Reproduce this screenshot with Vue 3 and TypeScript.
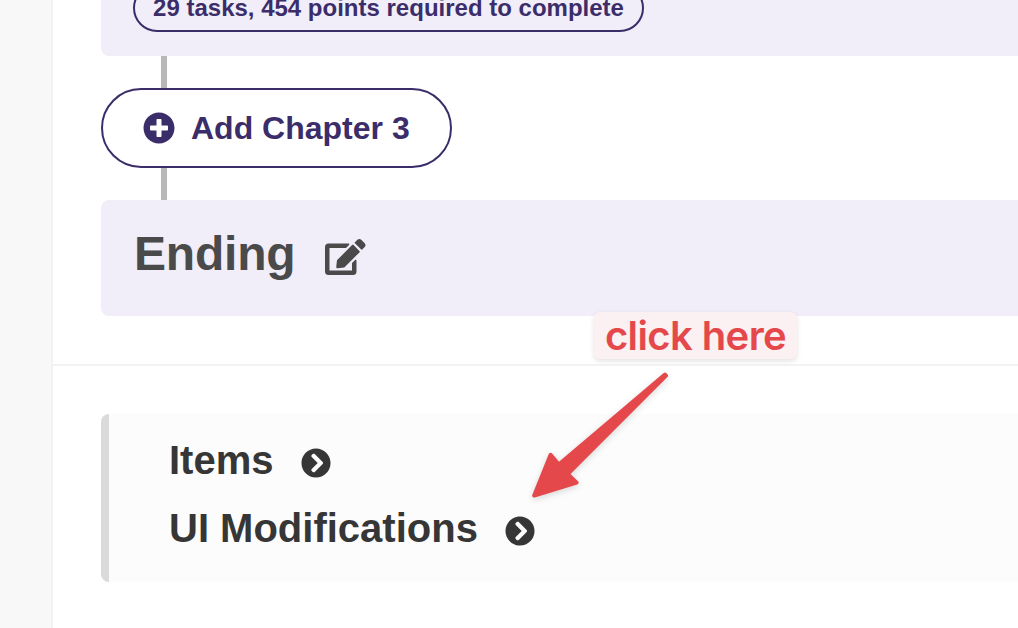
<script setup lang="ts">
interface SettingsLink {
  id: string;
  label: string;
}

const tasks = 29;
const points = 454;
const nextChapter = 3;

const links: SettingsLink[] = [
  { id: "items", label: "Items" },
  { id: "ui", label: "UI Modifications" }
];
</script>

<template>
  <div class="page">
    <aside class="page__sidebar"></aside>
    <main class="page__main">
      <section class="story">
        <div class="chapter chapter--last">
          <span class="chapter__badge">{{ tasks }} tasks, {{ points }} points required to complete</span>
        </div>
        <div class="connector"></div>
        <button class="add" type="button">
          <svg class="add__icon" viewBox="0 0 512 512">
            <path d="M256 8C119 8 8 119 8 256s111 248 248 248 248-111 248-248S393 8 256 8zm144 276c0 6.6-5.4 12-12 12h-92v92c0 6.6-5.4 12-12 12h-56c-6.6 0-12-5.4-12-12v-92h-92c-6.6 0-12-5.4-12-12v-56c0-6.6 5.4-12 12-12h92v-92c0-6.6 5.4-12 12-12h56c6.6 0 12 5.4 12 12v92h92c6.6 0 12 5.4 12 12v56z" />
          </svg>
          <span class="add__text">Add Chapter {{ nextChapter }}</span>
        </button>
        <div class="connector"></div>
        <div class="chapter chapter--ending">
          <h2 class="chapter__title">Ending</h2>
          <svg class="chapter__edit" viewBox="0 0 576 512">
            <path d="M402.6 83.2l90.2 90.2c3.8 3.8 3.8 10 0 13.8L274.4 405.6l-92.8 10.3c-12.4 1.4-22.9-9.1-21.5-21.5l10.3-92.8L388.8 83.2c3.8-3.8 10-3.8 13.8 0zm162-22.9l-48.8-48.8c-15.2-15.2-39.9-15.2-55.2 0l-35.4 35.4c-3.8 3.8-3.8 10 0 13.8l90.2 90.2c3.8 3.8 10 3.8 13.8 0l35.4-35.4c15.2-15.3 15.2-40 0-55.2zM384 346.2V448H64V128h229.8c3.2 0 6.2-1.3 8.5-3.5l40-40c7.6-7.6 2.2-20.5-8.5-20.5H48C21.5 64 0 85.5 0 112v352c0 26.5 21.5 48 48 48h352c26.5 0 48-21.5 48-48V306.2c0-10.7-12.9-16-20.5-8.5l-40 40c-2.2 2.3-3.5 5.3-3.5 8.5z" />
          </svg>
        </div>
      </section>
      <section class="extras">
        <div class="links">
          <div v-for="link in links" :key="link.id" class="links__row">
            <span class="links__label">{{ link.label }}</span>
            <svg class="links__icon" viewBox="0 0 512 512">
              <path d="M256 8c137 0 248 111 248 248S393 504 256 504 8 393 8 256 119 8 256 8zm113.9 231L234.4 103.5c-9.4-9.4-24.6-9.4-33.9 0l-17 17c-9.4 9.4-9.4 24.6 0 33.9L285.1 256 183.5 357.6c-9.4 9.4-9.4 24.6 0 33.9l17 17c9.4 9.4 24.6 9.4 33.9 0L369.9 273c9.4-9.4 9.4-24.6 0-34z" />
            </svg>
          </div>
        </div>
      </section>
    </main>

    <!-- annotation on top of the page -->
    <div class="hint">click here</div>
    <svg class="arrow" viewBox="520 364 160 146">
      <path d="M665 374.6L558.8 464.6L550.6 454.8L534.2 495.6L576.6 482.6L567.6 474L666 375.6Z" />
    </svg>
  </div>
</template>

<style>
body {
  background-color: #ffffff;
}
</style>

<style scoped>
.page {
  position: relative;
  display: flex;
  height: 628px;
  overflow: hidden;
  font-family: "Liberation Sans", Arial, sans-serif;
  font-weight: 700;
}

.page__sidebar {
  box-sizing: border-box;
  flex: none;
  width: 53px;
  background-color: #f8f8f8;
  border-right: 2px solid #f2f2f2;
}

.page__main {
  flex: 1;
  min-width: 0;
}

.story {
  padding: 0 0 48px 48px;
  border-bottom: 2px solid #f3f3f3;
}

.chapter {
  box-sizing: border-box;
  display: flex;
  padding-left: 32px;
  background-color: #f1edf9;
  border-radius: 8px 0 0 8px;
}

.chapter--last {
  height: 56px;
  align-items: flex-end;
  padding-bottom: 24px;
  border-top-left-radius: 0;
}

.chapter--ending {
  height: 116px;
  padding-top: 26px;
  padding-left: 33px;
}

.chapter__badge {
  box-sizing: border-box;
  display: flex;
  justify-content: center;
  flex: none;
  width: 511px;
  height: 48px;
  border: 2px solid #3b2d69;
  border-radius: 24px;
  color: #3b2d69;
  font-size: 24px;
  line-height: 44px;
  white-space: nowrap;
}

.chapter__title {
  margin: 0;
  width: 191px;
  font-size: 48px;
  letter-spacing: -0.2px;
  line-height: 56px;
  color: #4a4a4a;
}

.chapter__edit {
  width: 40.5px;
  height: 36px;
  margin-top: 13px;
  fill: #4a4a4a;
}

.connector {
  width: 6px;
  height: 32px;
  margin-left: 60px;
  background-color: #b8b8b8;
}

.add {
  box-sizing: border-box;
  display: flex;
  align-items: center;
  gap: 16px;
  width: 351px;
  height: 80px;
  padding: 0 0 0 40px;
  border: 2px solid #3b2d69;
  border-radius: 40px;
  background-color: #ffffff;
  color: #3b2d69;
  font: inherit;
  font-size: 32px;
  line-height: 40px;
  white-space: nowrap;
}

.add__icon {
  flex: none;
  width: 32px;
  height: 32px;
  fill: currentColor;
}

.extras {
  padding: 48px 0 0 48px;
}

.links {
  box-sizing: border-box;
  height: 168px;
  padding: 12px 0 20px 60px;
  border-left: 8px solid #dadada;
  border-radius: 8px 0 0 8px;
  background-color: #fcfcfc;
  color: #363636;
}

.links__row {
  display: flex;
  align-items: center;
  gap: 27px;
  height: 68px;
  font-size: 40px;
  line-height: 68px;
}

.links__icon {
  width: 30px;
  height: 30px;
  margin-top: 5px;
  fill: currentColor;
}

.hint {
  position: absolute;
  left: 594px;
  top: 312px;
  width: 203px;
  height: 47px;
  border-radius: 6px;
  background-color: #fbf0f2;
  box-shadow: 0 2px 5px rgba(0, 0, 0, 0.12);
  color: #e5484b;
  font-family: Inter, sans-serif;
  font-size: 40px;
  font-weight: 600;
  letter-spacing: -0.6px;
  line-height: 47px;
  text-align: center;
  white-space: nowrap;
}

.arrow {
  position: absolute;
  left: 520px;
  top: 364px;
  width: 160px;
  height: 146px;
  fill: #e5484b;
  stroke: #e5484b;
  stroke-width: 4px;
  stroke-linejoin: round;
  filter: drop-shadow(0 2px 3px rgba(0, 0, 0, 0.15));
}
</style>
